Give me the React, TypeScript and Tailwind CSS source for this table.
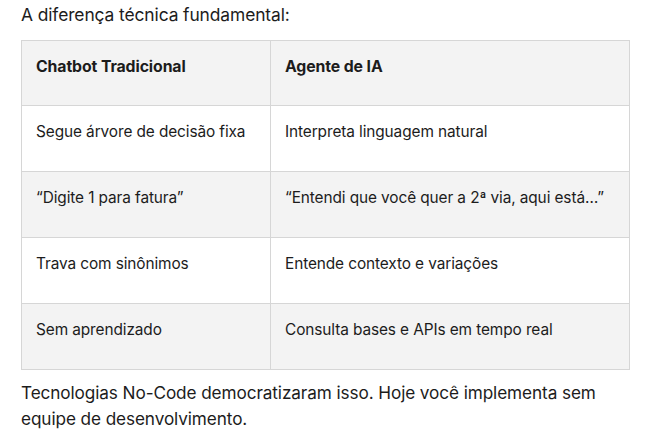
const ROWS = [
  ['Segue árvore de decisão fixa', 'Interpreta linguagem natural'],
  ['“Digite 1 para fatura”', '“Entendi que você quer a 2ª via, aqui está…”'],
  ['Trava com sinônimos', 'Entende contexto e variações'],
  ['Sem aprendizado', 'Consulta bases e APIs em tempo real'],
];

export default function App() {
  return (
    <div
      className="h-[433px] w-[650px] overflow-hidden bg-white px-[21px] text-[#1c1c1c]"
      style={{ fontFamily: 'Inter, "Noto Sans", sans-serif' }}
    >
      <p className="pt-[2px] text-[17.4px] leading-[26px] tracking-[-0.1px]">
        A diferença técnica fundamental:
      </p>
      <table className="mt-[12px] w-[609px] border-collapse text-[15.4px] tracking-[-0.1px]">
        <thead>
          <tr className="bg-[#f3f3f3]">
            <th className="h-[65px] w-[249px] border border-[#d6d6d6] px-[14px] pt-[15px] text-left align-top text-[15.8px] font-bold leading-[22px]">
              Chatbot Tradicional
            </th>
            <th className="h-[65px] border border-[#d6d6d6] px-[14px] pt-[15px] text-left align-top text-[15.8px] font-bold leading-[22px]">
              Agente de IA
            </th>
          </tr>
        </thead>
        <tbody>
          {ROWS.map(([a, b], i) => (
            <tr key={a} className={i % 2 === 1 ? 'bg-[#f3f3f3]' : 'bg-white'}>
              <td className="h-[66px] border border-[#d6d6d6] px-[14px] pt-[15px] align-top leading-[22px]">
                {a}
              </td>
              <td className="h-[66px] border border-[#d6d6d6] px-[14px] pt-[15px] align-top leading-[22px]">
                {b}
              </td>
            </tr>
          ))}
        </tbody>
      </table>
      <p className="mt-[10px] text-[17.2px] leading-[26px] tracking-[-0.1px]">
        Tecnologias No-Code democratizaram isso. Hoje você implementa sem
        <br />
        equipe de desenvolvimento.
      </p>
    </div>
  );
}
